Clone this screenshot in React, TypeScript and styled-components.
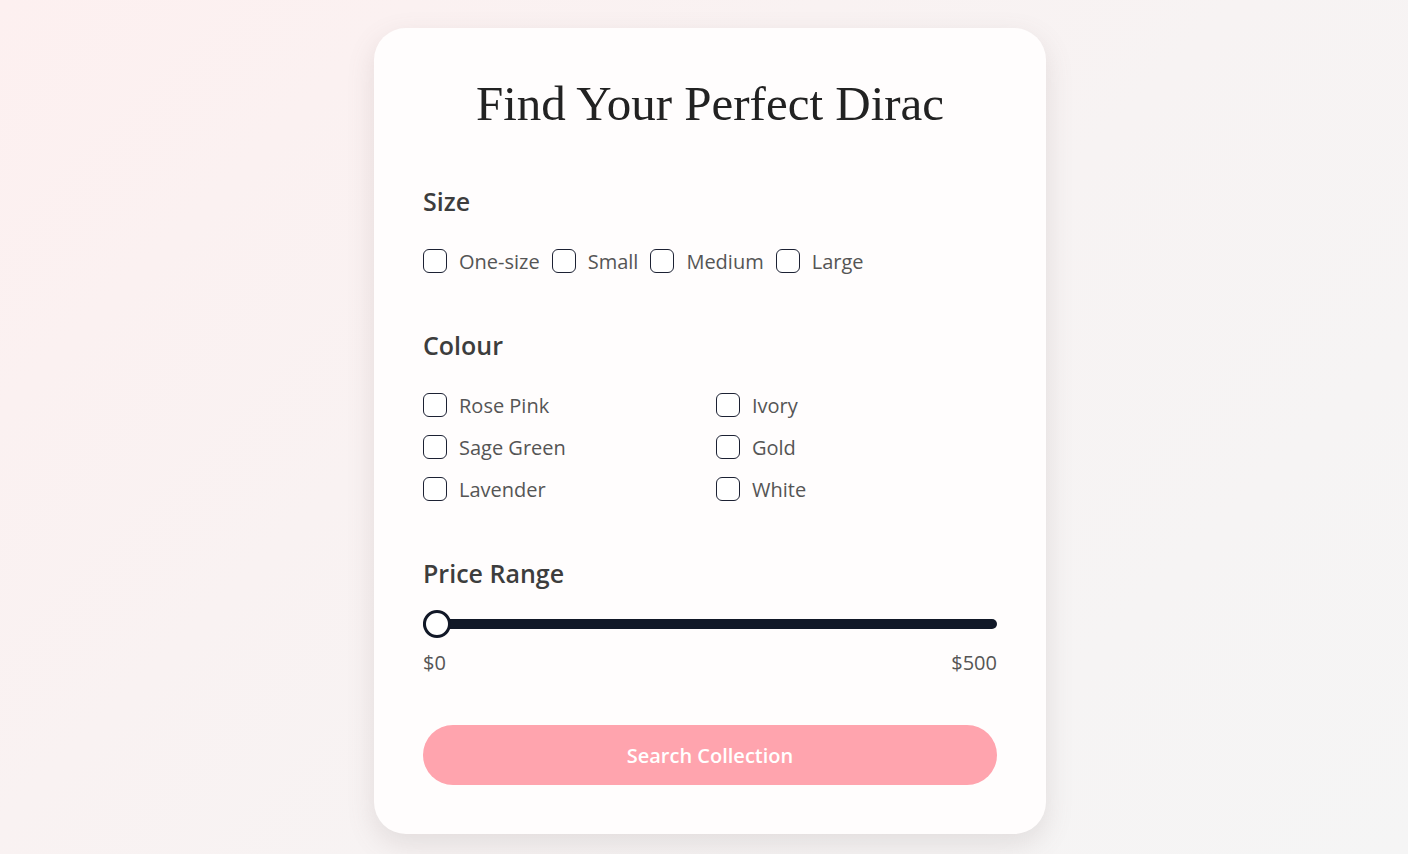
import React, { useState } from "react";
import styled, { createGlobalStyle } from "styled-components";

const GlobalStyle = createGlobalStyle`
  * { box-sizing: border-box; }
  html, body {
    margin: 0;
    padding: 0;
  }
  body {
    min-height: 100vh;
    background: linear-gradient(135deg, #fdf0f0 0%, #f7f3f3 55%, #f5f5f5 100%);
    font-family: "Open Sans", "Noto Sans", sans-serif;
  }
`;

const Page = styled.main`
  min-height: 100vh;
  display: flex;
  justify-content: center;
  padding: 28px 0 20px 12px;
`;

const Card = styled.section`
  width: 672px;
  background: #fffdfd;
  border-radius: 32px;
  padding: 48px 49px;
  box-shadow: 0 10px 28px rgba(120, 100, 100, 0.16);
  display: flex;
  flex-direction: column;
`;

const Title = styled.h1`
  margin: 0 0 56px;
  font-family: "Liberation Serif", "DejaVu Serif", serif;
  font-weight: 400;
  font-size: 49px;
  line-height: 55px;
  color: #222;
  text-align: center;
`;

const Section = styled.div`
  display: flex;
  flex-direction: column;
  & + & {
    margin-top: 55px;
  }
`;

const Heading = styled.h2<{ $tight?: boolean }>`
  margin: 0 0 ${(p) => (p.$tight ? "22px" : "30px")};
  font-size: 25px;
  line-height: 29px;
  font-weight: 600;
  color: #3d3d3d;
`;

const InlineOptions = styled.div`
  display: flex;
  gap: 12px;
`;

const GridOptions = styled.div`
  display: grid;
  grid-template-columns: 1fr 1fr;
  column-gap: 12px;
  row-gap: 12px;
`;

const Option = styled.label`
  display: flex;
  align-items: center;
  gap: 12px;
  height: 30px;
  font-size: 20px;
  color: #555;
  cursor: pointer;
`;

const Box = styled.input`
  appearance: none;
  margin: 0;
  width: 24px;
  height: 24px;
  border: 1.5px solid #1c2133;
  border-radius: 6px;
  background: #fff;
  cursor: pointer;
  &:checked {
    background: #1c2133;
  }
`;

const Range = styled.input`
  appearance: none;
  -webkit-appearance: none;
  width: 100%;
  height: 28px;
  margin: 0;
  background: transparent;
  &::-webkit-slider-runnable-track {
    height: 10px;
    background: #111827;
    border-radius: 5px;
  }
  &::-webkit-slider-thumb {
    -webkit-appearance: none;
    width: 28px;
    height: 28px;
    margin-top: -9px;
    border-radius: 50%;
    background: #fff;
    border: 3px solid #111827;
  }
`;

const PriceLabels = styled.div`
  display: flex;
  justify-content: space-between;
  margin-top: 10px;
  font-size: 20px;
  line-height: 30px;
  color: #555;
`;

const SearchButton = styled.button`
  margin-top: 47px;
  height: 60px;
  border: none;
  border-radius: 30px;
  background: #ffa4ae;
  color: #fff;
  font-family: "Open Sans", "Noto Sans", sans-serif;
  font-size: 20px;
  font-weight: 600;
  cursor: pointer;
`;

const sizes = ["One-size", "Small", "Medium", "Large"];
const colours = ["Rose Pink", "Ivory", "Sage Green", "Gold", "Lavender", "White"];

export default function App() {
  const [price, setPrice] = useState(0);
  return (
    <>
      <GlobalStyle />
      <Page>
        <Card>
          <Title>Find Your Perfect Dirac</Title>
          <Section>
            <Heading>Size</Heading>
            <InlineOptions>
              {sizes.map((s) => (
                <Option key={s}>
                  <Box type="checkbox" />
                  {s}
                </Option>
              ))}
            </InlineOptions>
          </Section>
          <Section>
            <Heading>Colour</Heading>
            <GridOptions>
              {colours.map((c) => (
                <Option key={c}>
                  <Box type="checkbox" />
                  {c}
                </Option>
              ))}
            </GridOptions>
          </Section>
          <Section>
            <Heading $tight>Price Range</Heading>
            <Range
              type="range"
              min={0}
              max={500}
              value={price}
              onChange={(e) => setPrice(Number(e.target.value))}
            />
            <PriceLabels>
              <span>$0</span>
              <span>$500</span>
            </PriceLabels>
          </Section>
          <SearchButton>Search Collection</SearchButton>
        </Card>
      </Page>
    </>
  );
}
